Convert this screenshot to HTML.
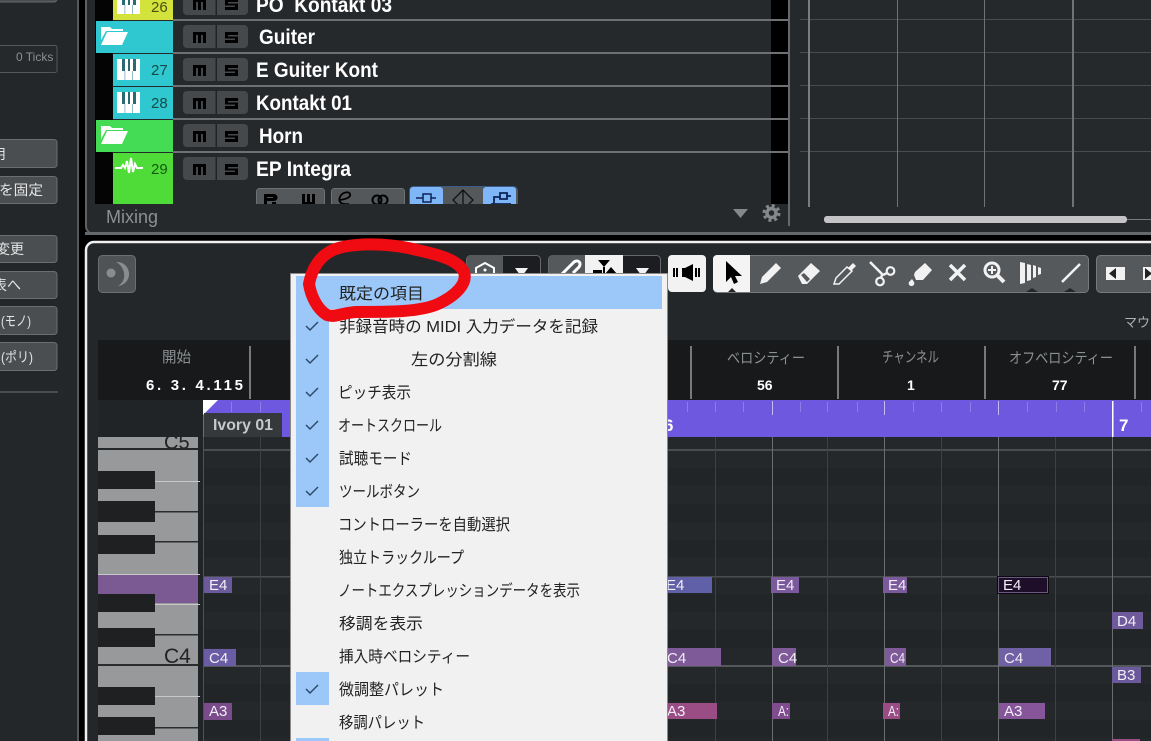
<!DOCTYPE html>
<html lang="ja"><head><meta charset="utf-8"><title>Cubase</title>
<style>
html,body{margin:0;padding:0;background:#000;width:1151px;height:741px;overflow:hidden}
svg{display:block;position:absolute;left:0;top:0}
text{font-family:"Liberation Sans","Noto Sans CJK JP",sans-serif}
.tn{font-size:21px;font-weight:bold;fill:#fff}
.num{font-size:15px;fill:#174a45}
.m{font-size:16px;fill:#222}
.lb{font-size:14px;fill:#e4e4e4}
.h{font-size:15px;fill:#8d9092}
.v{font-size:14px;font-weight:bold;fill:#fff}
.n{font-size:15px;fill:#f2eef6}
</style></head><body>
<svg width="1151" height="741" viewBox="0 0 1151 741" xmlns="http://www.w3.org/2000/svg">
<defs>
<g id="kb"><path d="M0 0h23v21H0z" fill="#fff"/><path d="M5 0h3v12H5zM11 0h2v12h-2zM16 0h3v12h-3z" fill="#2a6a70"/><path d="M7.500 12h.8v9h-.8zM15 12h.8v9H15z" fill="#7ab"/></g>
<path id="fold" d="M1 6V2h9l2 2h11v2H6L1 15zM7 7h21l-6 13H1z" fill="#fff"/>
<g id="msb"><rect x="0" y="0" width="65" height="23" rx="4" fill="#46494c"/><rect x="32.500" y="0" width="1.500" height="23" fill="#222"/><path d="M10 7h13v11h-3V10h-2v8h-3v-8h-2v8h-3z" fill="#000"/><path d="M42 7h13v3H45v1.500h10V18H42v-3h10v-1.500H42z" fill="#000"/></g>
<clipPath id="st"><rect x="240" y="0" width="300" height="204"/></clipPath>
<clipPath id="tb"><rect x="460" y="250" width="210" height="24"/></clipPath>
</defs>

<rect width="1151" height="741" fill="#000"/>
<!-- left panel -->
<rect x="0" y="0" width="77" height="741" fill="#23272a"/>
<rect x="77" y="0" width="2" height="741" fill="#55585a"/>
<rect x="-6" y="-20" width="63" height="22" rx="3" fill="#4a4d50" stroke="#66696b"/>
<rect x="-6" y="45.500" width="63" height="27" rx="2" fill="#26292c" stroke="#55585a"/>
<text x="16" y="61" style="font-size:12px;fill:#8d9092">0 Ticks</text>
<g fill="#4b4e51" stroke="#6b6e70">
<rect x="-6" y="139.500" width="63" height="28" rx="3"/>
<rect x="-6" y="176.500" width="63" height="27" rx="3"/>
<rect x="-6" y="235.500" width="63" height="27" rx="3"/>
<rect x="-6" y="271.500" width="63" height="27" rx="3"/>
<rect x="-6" y="306.500" width="63" height="28" rx="3"/>
<rect x="-6" y="342.500" width="63" height="28" rx="3"/>
</g>
<text class="lb" x="-8" y="159">用</text>
<text class="lb" x="-1" y="195" textLength="44" lengthAdjust="spacingAndGlyphs">を固定</text>
<text class="lb" x="-4" y="254" textLength="28" lengthAdjust="spacingAndGlyphs">変更</text>
<text class="lb" x="-7" y="290" textLength="28" lengthAdjust="spacingAndGlyphs">表へ</text>
<text class="lb" x="1" y="326" textLength="30" lengthAdjust="spacingAndGlyphs">(モノ)</text>
<text class="lb" x="1" y="362" textLength="32" lengthAdjust="spacingAndGlyphs">(ポリ)</text>
<rect x="0" y="391" width="58" height="2" fill="#4a4d50"/>

<!-- upper panel -->
<path d="M86 -5H1156V234H94a8 8 0 0 1-8-8z" fill="#26292c" stroke="#5e6163" stroke-width="2"/>
<rect x="85" y="232" width="1066" height="3" fill="#66696b"/>
<rect x="95" y="0" width="18" height="204" fill="#040404"/>
<rect x="771" y="0" width="17" height="204" fill="#000"/>
<rect x="788" y="0" width="2" height="226" fill="#66696b"/>
<!-- color cols -->
<rect x="113" y="0" width="60" height="20" fill="#d4e23c"/>
<rect x="96" y="21" width="77" height="32" fill="#2fc8d0"/>
<rect x="113" y="54" width="60" height="32" fill="#2fc8d0"/>
<rect x="113" y="87" width="60" height="32" fill="#2fc8d0"/>
<rect x="96" y="120" width="77" height="32" fill="#45dc55"/>
<rect x="113" y="153" width="60" height="51" fill="#50dc38"/>
<!-- separators -->
<g fill="#6e7173">
<rect x="173" y="19" width="615" height="2"/><rect x="173" y="52" width="615" height="2"/><rect x="173" y="85" width="615" height="2"/><rect x="173" y="118" width="615" height="2"/><rect x="173" y="151" width="615" height="2"/>
</g>
<use href="#kb" x="117" y="-7"/><use href="#kb" x="117" y="59"/><use href="#kb" x="117" y="92"/>
<use href="#fold" x="100" y="25"/><use href="#fold" x="100" y="124"/>
<path d="M115 168h6l2-3 2 3 2-7 2 12 2-15 2 14 2-8 2 4h6" fill="none" stroke="#fff" stroke-width="2"/>
<text class="num" x="151" y="12" style="fill:#4a5010">26</text>
<text class="num" x="151" y="75">27</text>
<text class="num" x="151" y="108">28</text>
<text class="num" x="151" y="174" style="fill:#125a12">29</text>
<use href="#msb" x="183" y="-8"/><use href="#msb" x="183" y="25"/><use href="#msb" x="183" y="58"/><use href="#msb" x="183" y="91"/><use href="#msb" x="183" y="124"/><use href="#msb" x="183" y="157"/>
<text class="tn" x="256" y="12" textLength="136" lengthAdjust="spacingAndGlyphs">PO&#160;&#160;Kontakt 03</text>
<text class="tn" x="259" y="44" textLength="56" lengthAdjust="spacingAndGlyphs">Guiter</text>
<text class="tn" x="256" y="77" textLength="122" lengthAdjust="spacingAndGlyphs">E Guiter Kont</text>
<text class="tn" x="256" y="110" textLength="96" lengthAdjust="spacingAndGlyphs">Kontakt 01</text>
<text class="tn" x="259" y="143" textLength="44" lengthAdjust="spacingAndGlyphs">Horn</text>
<text class="tn" x="256" y="176" textLength="95" lengthAdjust="spacingAndGlyphs">EP Integra</text>
<!-- small strip -->
<g clip-path="url(#st)">
<rect x="256.500" y="188.500" width="68" height="25" rx="3" fill="#55585a" stroke="#6e7173"/>
<rect x="331.500" y="188.500" width="73" height="25" rx="3" fill="#55585a" stroke="#6e7173"/>
<path d="M264 194h10a3.500 3.500 0 0 1 0 7h-7v1h-3zM267 197v1h6v-1zM272 202h4v3h-4zM264 202h3v3h-3zM302 194h3v8h2v-8h3v8h2v-8h3v11h-13z" fill="#000" fill-rule="evenodd"/>
<path d="M340 200c7-1 11-3 10-6c-1-3-8-2-10 3c-2 5 1 8 9 7" fill="none" stroke="#000" stroke-width="1.800"/>
<circle cx="377" cy="200" r="4.500" fill="none" stroke="#000" stroke-width="2"/><circle cx="383" cy="200" r="4.500" fill="none" stroke="#000" stroke-width="2"/>
<rect x="409.500" y="186.500" width="108" height="30" rx="4" fill="#55585a" stroke="#3a5a8a"/>
<rect x="410" y="187" width="33" height="30" rx="3" fill="#7fb6f8"/>
<rect x="483" y="187" width="33" height="30" rx="3" fill="#7fb6f8"/>
<path d="M416 198h7M431 198h5M423 194h8v8h-8z" fill="none" stroke="#0c2456" stroke-width="1.500"/>
<path d="M463 190v22M463 190l-10 10 10 10 10-10z" fill="none" stroke="#111" stroke-width="1.300"/>
<path d="M494 204v-7h6M500 193h7v6h-7zM507 196h4M491 204h20" fill="none" stroke="#0c2456" stroke-width="1.800"/>
</g>
<text x="106" y="223" style="font-size:18px;fill:#8d9092">Mixing</text>
<path d="M733 209h15l-7.500 9z" fill="#85888a"/>
<g transform="translate(771.500 213)" fill="none" stroke="#85888a"><circle r="4.500" stroke-width="3.500"/><circle r="7.500" stroke-width="3" stroke-dasharray="3 2.890"/></g>
<!-- right grid -->
<g fill="#494c4e">
<rect x="800" y="19" width="351" height="1"/><rect x="800" y="52" width="351" height="1"/><rect x="800" y="85" width="351" height="1"/><rect x="800" y="118" width="351" height="1"/><rect x="800" y="151" width="351" height="1"/>
</g>
<rect x="808" y="0" width="2" height="207" fill="#7a7d7f"/>
<rect x="897" y="0" width="1" height="207" fill="#707375"/>
<rect x="984" y="0" width="1" height="207" fill="#707375"/>
<rect x="1072" y="0" width="2" height="207" fill="#707375"/>
<rect x="1127" y="219" width="24" height="1" fill="#77797b"/>
<rect x="824" y="216" width="303" height="7" rx="3" fill="#c4c4c6"/>

<!-- lower panel -->
<path d="M86 750V250a8 8 0 0 1 8-8H1156V750z" fill="#23272a" stroke="#f0f0f0" stroke-width="2.500"/>
<rect x="98.500" y="255.500" width="37" height="37" rx="4" fill="#505356" stroke="#6c6f71"/>
<circle cx="111" cy="273" r="4.500" fill="#8a8c8e"/>
<path d="M116 262a12 12 0 0 1 2 24c5-3 7-8 6-13c-1-5-4-9-8-11z" fill="#8a8c8e"/>

<!-- toolbar -->
<g clip-path="url(#tb)">
<rect x="466.500" y="255.500" width="74" height="37" rx="4" fill="#1b1d20" stroke="#66696b"/>
<path d="M467 259a4 4 0 0 1 4-4h32v37h-36z" fill="#56595c"/>
<path d="M476 275v-7l9-5 9 5v7" fill="none" stroke="#fff" stroke-width="2"/><circle cx="485" cy="270" r="1.500" fill="#fff"/>
<path d="M515 268h13l-6.500 9z" fill="#f2f2f2"/>
<rect x="548.500" y="255.500" width="112" height="37" rx="4" fill="#1b1d20" stroke="#66696b"/>
<path d="M549 259a4 4 0 0 1 4-4h32v37h-36z" fill="#56595c"/>
<rect x="585" y="255" width="38" height="37" fill="#f2f2f2"/>
<path d="M559 277l7-7M566 270l8-8c4-3 8 1 5 5l-6 6" fill="none" stroke="#fff" stroke-width="3"/>
<path d="M598 260h12l-6 7zM603 267h2v7h-2zM593 270h9v4h-9zM611 267l6 7h-12z" fill="#000"/>
<path d="M636 268h13l-6.500 9z" fill="#f2f2f2"/>
</g>
<rect x="668" y="255" width="38" height="37" rx="4" fill="#f2f2f2"/>
<path d="M673 268h2v9h-2zM676 268h2v9h-2zM695 268h2v9h-2zM698 268h2v9h-2zM682 268h3l8-4v17l-8-4h-3z" fill="#000"/>
<rect x="713.500" y="255.500" width="375" height="37" rx="4" fill="#56595c" stroke="#77797b"/>
<path d="M717 255h33v37h-33a4 4 0 0 1-4-4v-29a4 4 0 0 1 4-4z" fill="#f4f4f4"/>
<path d="M726 261v21l5-5 3 7 4-2-3-6h7z" fill="#000"/>
<path d="M728 292l4-4 4 4z" fill="#23272a"/>
<!-- pencil -->
<path d="M760 284l2-7 14-14 5 5-14 14z" fill="#f2f2f2"/>
<!-- eraser -->
<path d="M798 276l13-13 9 8-13 13h-5z" fill="#f2f2f2"/><path d="M801 275l6 7 3-3-6-6z" fill="#56595c"/>
<!-- knife -->
<path d="M834 284l2-6 11-11 5 4-10 10-3 3z" fill="none" stroke="#f2f2f2" stroke-width="1.500"/><path d="M848 268l5-5 3 3-5 5z" fill="#f2f2f2"/>
<!-- scissors -->
<path d="M870 262l13 13M882 275l-1 3M883 275l4-2" fill="none" stroke="#f2f2f2" stroke-width="2.500"/><circle cx="880" cy="281.500" r="3.800" fill="none" stroke="#f2f2f2" stroke-width="2.200"/><circle cx="890.500" cy="271" r="3.800" fill="none" stroke="#f2f2f2" stroke-width="2.200"/>
<!-- glue -->
<path d="M915 272l10-9 7 7-9 10h-7l-2-5z" fill="#f2f2f2"/><path d="M912 279l2 3a2.800 2.800 0 1 1-5 0z" fill="#f2f2f2"/>
<!-- X -->
<path d="M950 265l15 15M965 265l-15 15" stroke="#f2f2f2" stroke-width="3.500"/>
<!-- magnifier -->
<circle cx="992" cy="270" r="7" fill="none" stroke="#f2f2f2" stroke-width="3"/><path d="M997 275l7 7" stroke="#f2f2f2" stroke-width="4"/><path d="M988 270h8M992 266v8" stroke="#f2f2f2" stroke-width="2"/>
<!-- bars -->
<path d="M1020 262l5 1v20l-5 1zM1027 264l4 1v15l-4 1zM1033 265l3 1v11l-3 1zM1038 267l3 1v6l-3 1z" fill="#f2f2f2"/>
<!-- line -->
<path d="M1062 282l18-18" stroke="#f2f2f2" stroke-width="2.500"/>
<path d="M1026 292l6-4 6 4zM1064 292l6-4 6 4z" fill="#23272a"/>
<rect x="1096.500" y="255.500" width="70" height="37" rx="4" fill="#56595c" stroke="#77797b"/>
<rect x="1106" y="267" width="19" height="13" fill="#f2f2f2"/><path d="M1116 268v11l-7-5.500z" fill="#222"/>
<rect x="1143" y="267" width="19" height="13" fill="#f2f2f2"/><path d="M1145 268v11l7-5.500z" fill="#222"/>
<text x="1124" y="327" style="font-size:13px;fill:#aeb0b2">マウス</text>

<!-- info line -->
<rect x="98" y="340" width="1053" height="60" fill="#17191b"/>
<g fill="#77797b"><rect x="249" y="346" width="2" height="53"/><rect x="690" y="346" width="2" height="53"/><rect x="837" y="346" width="2" height="53"/><rect x="984" y="346" width="2" height="53"/><rect x="1134" y="346" width="2" height="53"/></g>
<text class="h" x="162" y="362" textLength="29" lengthAdjust="spacingAndGlyphs">開始</text>
<text class="v" x="146" y="390" textLength="97" lengthAdjust="spacing" style="font-size:15px">6. 3. 4.115</text>
<text class="h" x="727" y="363" textLength="78" lengthAdjust="spacingAndGlyphs">ベロシティー</text>
<text class="h" x="882" y="362" textLength="57" lengthAdjust="spacingAndGlyphs">チャンネル</text>
<text class="h" x="1009" y="363" textLength="104" lengthAdjust="spacingAndGlyphs">オフベロシティー</text>
<text class="v" x="757" y="390">56</text><text class="v" x="907" y="390">1</text><text class="v" x="1052" y="390">77</text>

<!-- grid rows -->
<rect x="203" y="437" width="948" height="304" fill="#25282a"/>
<g fill="#222528">
<rect x="203" y="468" width="948" height="18"/><rect x="203" y="504" width="948" height="18"/><rect x="203" y="540" width="948" height="18"/><rect x="203" y="594" width="948" height="18"/><rect x="203" y="630" width="948" height="18"/><rect x="203" y="684" width="948" height="18"/><rect x="203" y="720" width="948" height="18"/>
</g>
<rect x="98" y="400" width="105" height="341" fill="#212427"/>
<g fill="#4a4d4f"><rect x="203" y="449" width="948" height="2"/><rect x="203" y="576" width="948" height="1.500"/><rect x="203" y="665" width="948" height="2" fill="#55585a"/></g>
<g fill="#3e4143"><rect x="260" y="437" width="1" height="304"/><rect x="715" y="437" width="1" height="304"/><rect x="827" y="437" width="1" height="304"/><rect x="941" y="437" width="1" height="304"/><rect x="1055" y="437" width="1" height="304"/></g>
<g fill="#6a6d6f"><rect x="772" y="437" width="1" height="304"/><rect x="884" y="437" width="1" height="304"/><rect x="998" y="437" width="1" height="304"/><rect x="1112" y="437" width="1" height="304"/><rect x="203" y="437" width="1" height="304" fill="#505355"/></g>
<!-- ruler -->
<rect x="203" y="400" width="948" height="37" fill="#6f58e0"/>
<path d="M203 400h15l-15 15z" fill="#fff"/>
<g fill="#8c7de8"><rect x="231" y="402" width="1" height="10"/><rect x="260" y="402" width="1" height="10"/><rect x="687" y="402" width="1" height="10"/><rect x="715" y="402" width="1" height="10"/><rect x="743" y="402" width="1" height="10"/><rect x="800" y="402" width="1" height="10"/><rect x="827" y="402" width="1" height="10"/><rect x="857" y="402" width="1" height="10"/><rect x="913" y="402" width="1" height="10"/><rect x="941" y="402" width="1" height="10"/><rect x="970" y="402" width="1" height="10"/><rect x="1027" y="402" width="1" height="10"/><rect x="1056" y="402" width="1" height="10"/><rect x="1084" y="402" width="1" height="10"/><rect x="1141" y="402" width="1" height="10"/></g>
<g fill="#c5bef5"><rect x="772" y="401" width="1" height="14"/><rect x="884" y="401" width="1" height="14"/><rect x="998" y="401" width="1" height="14"/></g>
<rect x="1112" y="401" width="1.500" height="36" fill="#fff"/>
<text x="1119" y="431" style="font-size:17px;font-weight:bold;fill:#fff">7</text>
<text x="664" y="431" style="font-size:17px;font-weight:bold;fill:#fff">6</text>
<rect x="204" y="413" width="78" height="24" fill="#36393c"/>
<text x="213" y="430" textLength="60" lengthAdjust="spacingAndGlyphs" style="font-size:16px;font-weight:bold;fill:#c6c8ca">Ivory 01</text>

<!-- keyboard -->
<rect x="98" y="437" width="100" height="304" fill="#98999b"/>
<text x="164" y="449" style="font-size:20px;fill:#222">C5</text>
<rect x="98" y="448" width="100" height="2" fill="#23272a"/>
<g fill="#1e2022">
<rect x="98" y="471" width="57" height="18"/><rect x="98" y="501" width="57" height="21"/><rect x="98" y="535" width="57" height="19"/>
</g>
<rect x="98" y="575" width="100" height="19" fill="#7b5a94"/><rect x="155" y="594" width="43" height="9" fill="#7b5a94"/>
<g fill="#1e2022">
<rect x="98" y="594" width="57" height="18"/><rect x="98" y="628" width="57" height="19"/><rect x="98" y="687" width="57" height="18"/><rect x="98" y="717" width="57" height="18"/>
</g>
<g fill="#2a2c2e"><rect x="155" y="511" width="43" height="1.500"/><rect x="155" y="541" width="43" height="1.500"/><rect x="155" y="634" width="43" height="1.500"/><rect x="98" y="664" width="100" height="2"/><rect x="155" y="727" width="43" height="1.500"/></g>
<g fill="#c8c8ca"><rect x="155" y="481" width="45" height="1"/><rect x="98" y="574" width="102" height="1"/><rect x="155" y="604" width="45" height="1"/><rect x="155" y="696" width="45" height="1"/></g>
<text x="164" y="663" style="font-size:21px;fill:#222">C4</text>

<!-- notes -->
<g>
<rect x="204" y="577" width="28" height="16" fill="#6a5a9c"/><text class="n" x="209" y="590">E4</text>
<rect x="204" y="649" width="32" height="17" fill="#6a5ca5"/><text class="n" x="209" y="663">C4</text>
<rect x="204" y="703" width="28" height="17" fill="#7a4c8c"/><text class="n" x="209" y="716">A3</text>
<rect x="660" y="577" width="52" height="16" fill="#6060a8"/><text class="n" x="666" y="590">E4</text>
<rect x="771" y="577" width="28" height="16" fill="#7a5a9c"/><text class="n" x="776" y="590">E4</text>
<rect x="883" y="577" width="24" height="16" fill="#7a5a9c"/><text class="n" x="888" y="590">E4</text>
<rect x="997" y="576" width="52" height="18" fill="#0c0810"/><rect x="998.500" y="577.500" width="49" height="15" fill="#1e0e2a" stroke="#6a5a80"/><text class="n" x="1003" y="590">E4</text>
<rect x="1112" y="612" width="31" height="17" fill="#6f5a9c"/><text class="n" x="1117" y="626">D4</text>
<rect x="660" y="648" width="61" height="18" fill="#7f5a98"/><text class="n" x="667" y="663">C4</text>
<rect x="772" y="648" width="24" height="18" fill="#7f5a98"/><text class="n" x="778" y="663">C4</text>
<rect x="885" y="648" width="21" height="18" fill="#7f5a98"/><text class="n" x="890" y="663" textLength="15" lengthAdjust="spacingAndGlyphs">C4</text>
<rect x="999" y="648" width="52" height="18" fill="#7060a5"/><text class="n" x="1004" y="663">C4</text>
<rect x="1112" y="667" width="29" height="16" fill="#6a5a9c"/><text class="n" x="1117" y="680">B3</text>
<rect x="660" y="703" width="57" height="16" fill="#9a4d85"/><text class="n" x="667" y="716">A3</text>
<rect x="772" y="703" width="18" height="16" fill="#7f4d8e"/><text class="n" x="778" y="716" textLength="11" lengthAdjust="spacingAndGlyphs">A:</text>
<rect x="883" y="703" width="17" height="16" fill="#9a4d85"/><text class="n" x="888" y="716" textLength="11" lengthAdjust="spacingAndGlyphs">A:</text>
<rect x="999" y="703" width="46" height="16" fill="#87569a"/><text class="n" x="1004" y="716">A3</text>
<rect x="1112" y="739" width="28" height="2" fill="#9a4d85"/>
</g>

<!-- context menu -->
<rect x="290" y="273" width="378" height="468" fill="#8a8a8a"/>
<rect x="291" y="274" width="376" height="467" fill="#f1f1f1"/>
<rect x="296" y="276" width="366" height="33" fill="#9bc8f8"/>
<rect x="296" y="309" width="33" height="198" fill="#9bc8f8"/>
<rect x="296" y="672" width="33" height="33" fill="#9bc8f8"/>
<rect x="296" y="738" width="33" height="3" fill="#9bc8f8"/>
<g fill="none" stroke="#2e4a6a" stroke-width="1.500">
<path d="M306 326l4 4 8-8"/><path d="M306 359l4 4 8-8"/><path d="M306 392l4 4 8-8"/><path d="M306 425l4 4 8-8"/><path d="M306 458l4 4 8-8"/><path d="M306 491l4 4 8-8"/><path d="M306 689l4 4 8-8"/>
</g>
<text class="m" x="339" y="299" textLength="85" lengthAdjust="spacingAndGlyphs">既定の項目</text>
<text class="m" x="339" y="332" textLength="259" lengthAdjust="spacingAndGlyphs">非録音時の MIDI 入力データを記録</text>
<text class="m" x="411" y="365" textLength="86" lengthAdjust="spacingAndGlyphs">左の分割線</text>
<text class="m" x="338" y="398" textLength="73" lengthAdjust="spacingAndGlyphs">ピッチ表示</text>
<text class="m" x="338" y="431" textLength="104" lengthAdjust="spacingAndGlyphs">オートスクロール</text>
<text class="m" x="339" y="464" textLength="73" lengthAdjust="spacingAndGlyphs">試聴モード</text>
<text class="m" x="339" y="497" textLength="81" lengthAdjust="spacingAndGlyphs">ツールボタン</text>
<text class="m" x="338" y="530" textLength="172" lengthAdjust="spacingAndGlyphs">コントローラーを自動選択</text>
<text class="m" x="339" y="563" textLength="125" lengthAdjust="spacingAndGlyphs">独立トラックループ</text>
<text class="m" x="338" y="596" textLength="242" lengthAdjust="spacingAndGlyphs">ノートエクスプレッションデータを表示</text>
<text class="m" x="339" y="629" textLength="84" lengthAdjust="spacingAndGlyphs">移調を表示</text>
<text class="m" x="339" y="662" textLength="131" lengthAdjust="spacingAndGlyphs">挿入時ベロシティー</text>
<text class="m" x="339" y="695" textLength="105" lengthAdjust="spacingAndGlyphs">微調整パレット</text>
<text class="m" x="339" y="728" textLength="86" lengthAdjust="spacingAndGlyphs">移調パレット</text>

<!-- red annotation -->
<path d="M309 284C312 268 320 256 333 250C350 243 385 242 417 250C440 255 458 260 464 272C468 284 455 296 438 304C420 312 390 312 357 312C345 312 335 318 327 315C317 309 311 296 309 284Z" fill="none" stroke="#f00b12" stroke-width="12" stroke-linejoin="round"/>
</svg>
</body></html>
